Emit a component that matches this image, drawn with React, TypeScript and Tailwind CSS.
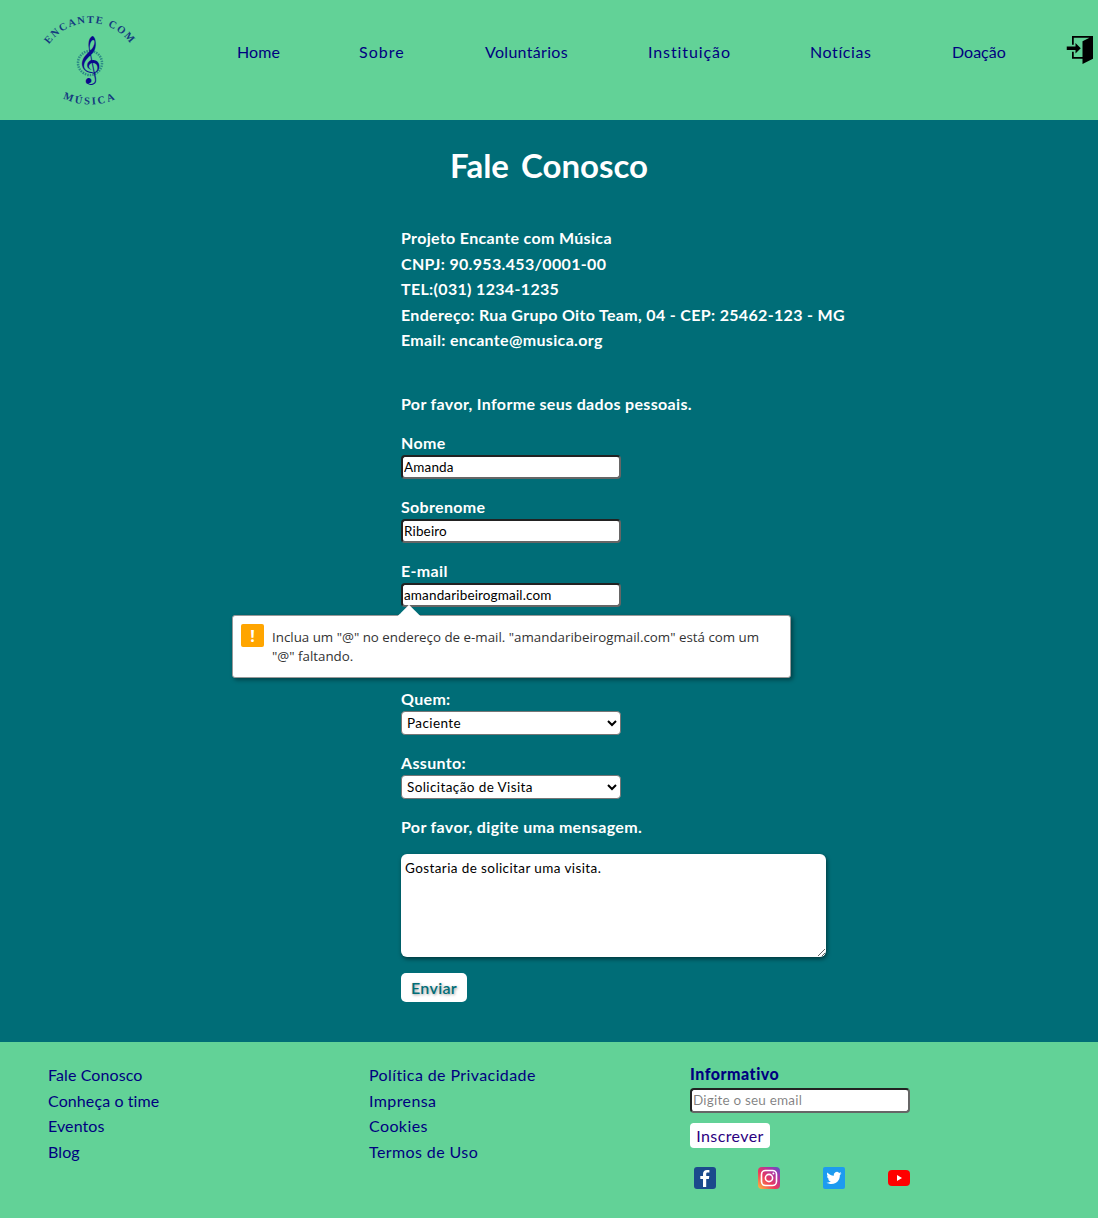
import { ImEnter } from 'react-icons/im';

const comic = "font-['Lato','Noto_Sans',sans-serif]";

const navLinks = [
  { label: 'Home', width: 'w-[122px]', spacing: 'tracking-[0.1px]' },
  { label: 'Sobre', width: 'w-[126px]', spacing: 'tracking-[1px]' },
  { label: 'Voluntários', width: 'w-[163px]', spacing: 'tracking-[0.3px]' },
  { label: 'Instituição', width: 'w-[162px]', spacing: 'tracking-[0.9px]' },
  { label: 'Notícias', width: 'w-[142px]', spacing: 'tracking-[0.6px]' },
  { label: 'Doação', width: 'w-[60px]', spacing: 'tracking-[0px]' },
];
const contactLines = [
  'Projeto Encante com Música',
  'CNPJ: 90.953.453/0001-00',
  'TEL:(031) 1234-1235',
  'Endereço: Rua Grupo Oito Team, 04 - CEP: 25462-123 - MG',
  'Email: encante@musica.org',
];
const footerOne = ['Fale Conosco', 'Conheça o time', 'Eventos', 'Blog'];
const footerTwo = ['Política de Privacidade', 'Imprensa', 'Cookies', 'Termos de Uso'];

function Logo() {
  return (
    <svg width="100" height="100" viewBox="0 0 100 100" className="shrink-0">
      <defs>
        <path id="arcTop" d="M 0 63 A 50 50 0 0 1 100 63" />
        <path id="arcBottom" d="M 14 83 A 62 62 0 0 0 86 83" />
      </defs>
      <text fontFamily="'Liberation Serif', serif" fontSize="10.5" fontWeight="700" fill="#14397f" letterSpacing="1.5">
        <textPath href="#arcTop" startOffset="50%" textAnchor="middle">ENCANTE COM</textPath>
      </text>
      <text fontFamily="'Liberation Serif', serif" fontSize="10.5" fontWeight="700" fill="#14397f" letterSpacing="2.2">
        <textPath href="#arcBottom" startOffset="50%" textAnchor="middle">MÚSICA</textPath>
      </text>
      <circle cx="50" cy="53" r="12" fill="none" stroke="#2c8a86" strokeWidth="2.500" strokeDasharray="1.5 1" />
      <text x="49" y="63" textAnchor="middle" fontFamily="'DejaVu Sans', sans-serif" fontSize="41" fill="#0a0a8c">
        𝄞
      </text>
    </svg>
  );
}

function Field({ label, value }: { label: string; value: string }) {
  return (
    <div className="mb-[16px]">
      <label className="block h-[24px] pt-[1px] text-[16px] font-bold leading-[22px] text-white">{label}</label>
      <input
        defaultValue={value}
        className="block h-[24px] w-[220px] rounded-[4px] border-2 border-t-[#222] border-l-[#222] border-r-[#666] border-b-[#666] bg-white px-[1px] pt-[2px] text-[13.5px] font-normal tracking-[0.15px] text-black outline-none"
      />
    </div>
  );
}

function SelectField({ label, value }: { label: string; value: string }) {
  return (
    <div className="mb-[16px]">
      <label className="block h-[24px] pt-[1px] text-[16px] font-bold leading-[22px] text-white">{label}</label>
      <select
        defaultValue={value}
        className="block h-[24px] w-[220px] appearance-auto rounded-[4px] border border-[#767676] bg-white pl-[1px] text-[13.5px] font-normal tracking-[0.4px] text-black"
      >
        <option>{value}</option>
      </select>
    </div>
  );
}

function SocialIcons() {
  return (
    <div className="mt-[19px] flex items-center gap-[42px] pl-[4px]">
      <svg width="22" height="22" viewBox="0 0 22 22">
        <rect width="22" height="22" rx="3" fill="#1b4a8c" />
        <path d="M12.200 20v-8h2.700l.4-3h-3.100V7.100c0-.9.300-1.500 1.500-1.500h1.700V3c-.3 0-1.300-.1-2.400-.1-2.400 0-4 1.400-4 4.100V9H6.300v3H9v8z" fill="#fff" />
      </svg>
      <svg width="22" height="22" viewBox="0 0 22 22">
        <defs>
          <linearGradient id="igGrad" x1="0" y1="1" x2="1" y2="0">
            <stop offset="0" stopColor="#fdc13d" />
            <stop offset="0.4" stopColor="#ee3a5a" />
            <stop offset="0.75" stopColor="#a634a8" />
            <stop offset="1" stopColor="#5458c8" />
          </linearGradient>
        </defs>
        <rect width="22" height="22" rx="4" fill="url(#igGrad)" />
        <rect x="3.500" y="3.500" width="15" height="15" rx="4" fill="none" stroke="#fff" strokeWidth="1.600" />
        <circle cx="11" cy="11" r="3.600" fill="none" stroke="#fff" strokeWidth="1.600" />
        <circle cx="15.400" cy="6.600" r="1" fill="#fff" />
      </svg>
      <svg width="22" height="22" viewBox="0 0 22 22" className="ml-[1px]">
        <rect width="22" height="22" rx="2" fill="#1d9bf0" />
        <path d="M18.500 6.300c-.6.300-1.200.4-1.800.5.600-.4 1.100-1 1.400-1.700-.6.400-1.300.6-2 .8a3.100 3.100 0 0 0-5.300 2.800c-2.600-.1-4.900-1.400-6.400-3.300-.8 1.400-.4 3.200 1 4.100-.5 0-1-.2-1.400-.4 0 1.500 1.100 2.800 2.500 3.100-.5.100-.9.100-1.400 0 .4 1.200 1.500 2.100 2.900 2.100a6.300 6.300 0 0 1-4.600 1.300c4 2.600 9.800 1.800 12.400-2.800.8-1.400 1.100-3 1-4.600.6-.5 1.200-1.100 1.700-1.900z" fill="#fff" />
      </svg>
      <svg width="22" height="16" viewBox="0 0 22 16" className="ml-[1px]">
        <rect width="22" height="16" rx="4" fill="#ff0000" />
        <path d="M9 5l5 3-5 3z" fill="#fff" />
      </svg>
    </div>
  );
}

export default function App() {
  return (
    <div className={`${comic} w-[1098px] min-h-[1218px] overflow-hidden bg-[#006d77] tracking-[0.33px]`}>
      <header className="flex h-[120px] items-center bg-[#62d297]">
        <div className="ml-[40px] w-[197px]">
          <Logo />
        </div>
        <nav className="flex text-[16px] text-[#000080]">
          {navLinks.map((link) => (
            <a key={link.label} href="#" className={`${link.width} ${link.spacing} mt-[-16px] leading-[24px]`}>
              {link.label}
            </a>
          ))}
        </nav>
        <div className="ml-auto mr-[5px] mt-[-20px] text-black">
          <ImEnter size={28} />
        </div>
      </header>

      <main className="relative h-[922px]">
        <h1 className="pt-[24px] text-center text-[33px] font-bold leading-[42px] tracking-normal text-white [word-spacing:4px]">
          Fale Conosco
        </h1>

        <div className="ml-[401px] mt-[39px] text-[16px] font-bold leading-[25.6px] text-white">
          {contactLines.map((line) => (
            <p key={line}>{line}</p>
          ))}
          <p className="mt-[38px] mb-[14px]">Por favor, Informe seus dados pessoais.</p>

          <Field label="Nome" value="Amanda" />
          <Field label="Sobrenome" value="Ribeiro" />
          <Field label="E-mail" value="amandaribeirogmail.com" />
          {/* campo coberto pelo aviso de validação */}
          <Field label="" value="" />
          <SelectField label="Quem:" value="Paciente" />
          <SelectField label="Assunto:" value="Solicitação de Visita" />

          <p className="mt-[-1px] mb-[15px]">Por favor, digite uma mensagem.</p>
          <textarea
            defaultValue="Gostaria de solicitar uma visita."
            className="block h-[103px] w-[425px] rounded-[6px] bg-white px-[4px] py-[5px] text-[13.5px] font-normal leading-[18px] tracking-[0.4px] text-black shadow-[1px_2px_4px_rgba(0,0,0,0.5)] outline-none"
          />
          <button className="mt-[16px] block h-[29px] w-[66px] rounded-[5px] bg-white text-[16px] font-semibold text-[#006d77] [text-shadow:1px_1px_3px_rgba(0,0,0,0.4)]">
            Enviar
          </button>
        </div>

        <div className="absolute left-[232px] top-[495px] h-[63px] w-[559px] rounded-[3px] border border-[#999] bg-white font-['Open_Sans',sans-serif] tracking-normal shadow-[2px_2px_4px_rgba(0,0,0,0.4)]">
          <div className="absolute left-[168px] top-[-8px] h-[16px] w-[16px] rotate-45 bg-white" />
          <div className="relative flex items-start pl-[8px] pt-[8px]">
            <div className="flex h-[23px] w-[23px] shrink-0 items-center justify-center rounded-[2px] bg-[#ffa500] text-[16px] font-bold leading-none text-white">
              !
            </div>
            <p className="ml-[8px] mt-[4px] w-[495px] text-[13.33px] leading-[19px] text-[#333]">
              Inclua um "@" no endereço de e-mail. "amandaribeirogmail.com" está com um "@" faltando.
            </p>
          </div>
        </div>
      </main>

      <footer className="grid h-[176px] grid-cols-[321px_321px_1fr] bg-[#62d297] pl-[48px] pt-[20px] text-[16px] leading-[25.6px] tracking-[0.4px] text-[#000080]">
        <ul className="tracking-[0.1px]">
          {footerOne.map((item) => (
            <li key={item}>{item}</li>
          ))}
        </ul>
        <ul>
          {footerTwo.map((item) => (
            <li key={item}>{item}</li>
          ))}
        </ul>
        <div>
          <p className="h-[26px] font-black leading-[24px] tracking-[0.5px]">Informativo</p>
          <input
            placeholder="Digite o seu email"
            className="block h-[25px] w-[220px] rounded-[4px] border-2 border-t-[#222] border-l-[#222] border-r-[#666] border-b-[#666] bg-white px-[1px] text-[13.5px] tracking-[0.2px] text-black outline-none"
          />
          <button className="mt-[10px] block h-[25px] w-[80px] rounded-[4px] bg-white text-[16px] leading-[25px] text-[#2b0080]">
            Inscrever
          </button>
          <SocialIcons />
        </div>
      </footer>
    </div>
  );
}
